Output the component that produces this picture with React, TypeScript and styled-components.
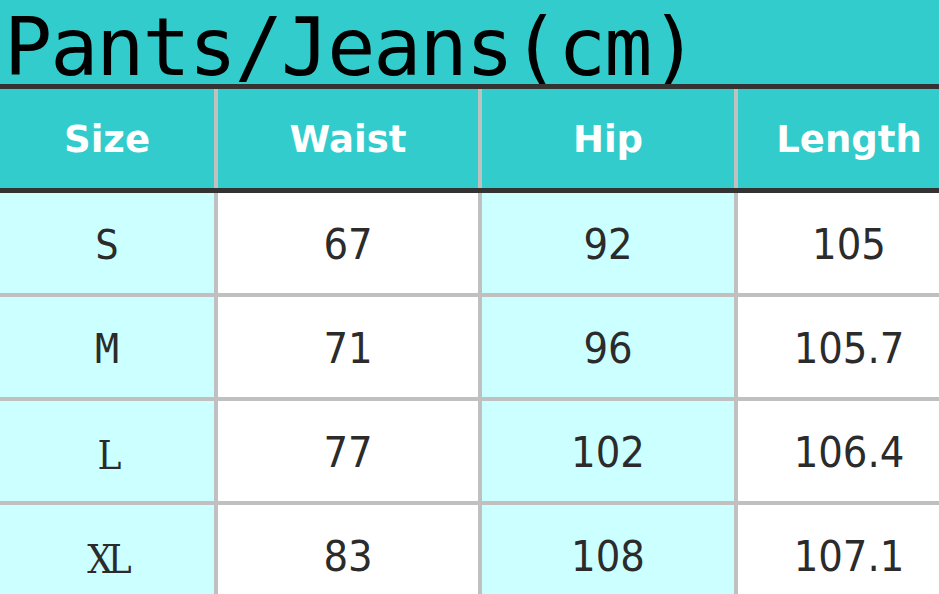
import React from 'react'
import styled, { createGlobalStyle } from 'styled-components'

const GlobalStyle = createGlobalStyle`
  html, body {
    margin: 0;
    padding: 0;
    overflow: hidden;
    background: #ffffff;
  }
`

const TEAL = '#33cccc'
const PALE = '#ccffff'
const GRID = '#c0c0c0'
const COLS = '214px 260px 252px 222px'

type Row = { size: string; serif?: boolean; waist: string; hip: string; length: string }

const rows: Row[] = [
  { size: 'S', waist: '67', hip: '92', length: '105' },
  { size: 'M', waist: '71', hip: '96', length: '105.7' },
  { size: 'L', serif: true, waist: '77', hip: '102', length: '106.4' },
  { size: 'XL', serif: true, waist: '83', hip: '108', length: '107.1' },
]

const App: React.FC = () => {
  return (
    <>
      <GlobalStyle />
      <Sheet>
        <Title>Pants/Jeans(cm)</Title>
        <HeaderRow>
          <HeadCell>Size</HeadCell>
          <HeadCell>Waist</HeadCell>
          <HeadCell>Hip</HeadCell>
          <HeadCell>Length</HeadCell>
        </HeaderRow>
        <Body>
          {rows.map(r => (
            <React.Fragment key={r.size}>
              <SizeCell serif={r.serif}>{r.size}</SizeCell>
              <ValueCell>{r.waist}</ValueCell>
              <ValueCell shaded>{r.hip}</ValueCell>
              <ValueCell>{r.length}</ValueCell>
            </React.Fragment>
          ))}
        </Body>
      </Sheet>
    </>
  )
}

const Sheet = styled.div`
  width: 960px;
  display: flex;
  flex-direction: column;
`

const Title = styled.div`
  height: 84px;
  box-sizing: border-box;
  padding: 11px 0 0 4px;
  background: ${TEAL};
  color: #000;
  font-family: 'DejaVu Sans Mono', monospace;
  font-size: 80px;
  letter-spacing: -2px;
  line-height: 73px;
  white-space: nowrap;
  position: relative;
  z-index: 0;
`

const HeaderRow = styled.div`
  display: grid;
  grid-template-columns: ${COLS};
  column-gap: 4px;
  height: 109px;
  box-sizing: border-box;
  background: ${GRID};
  border-top: 5px solid #333333;
  border-bottom: 5px solid #333333;
  position: relative;
  z-index: 1;
`

const HeadCell = styled.div`
  display: flex;
  align-items: center;
  justify-content: center;
  background: ${TEAL};
  color: #ffffff;
  font-family: 'DejaVu Sans', sans-serif;
  font-weight: bold;
  font-size: 37px;
  padding-top: 2px;
`

const Body = styled.div`
  display: grid;
  grid-template-columns: ${COLS};
  grid-auto-rows: 100px;
  gap: 4px;
  background: ${GRID};
`

const SizeCell = styled.div<{ serif?: boolean }>`
  display: flex;
  align-items: center;
  justify-content: center;
  background: ${PALE};
  color: #2b2b2b;
  font-family: ${p =>
    p.serif ? "'DejaVu Serif Condensed', 'DejaVu Serif', serif" : "'DejaVu Sans Mono', monospace"};
  font-stretch: ${p => (p.serif ? 'condensed' : 'normal')};
  font-size: 40px;
  letter-spacing: ${p => (p.serif ? '-5px' : '0')};
  padding-top: ${p => (p.serif ? '8px' : '4px')};
`

const ValueCell = styled.div<{ shaded?: boolean }>`
  display: flex;
  align-items: center;
  justify-content: center;
  background: ${p => (p.shaded ? PALE : '#ffffff')};
  color: #2b2b2b;
  font-family: 'DejaVu Sans Condensed', 'DejaVu Sans', sans-serif;
  font-stretch: condensed;
  font-size: 43px;
  padding-top: 2px;
`

export default App
